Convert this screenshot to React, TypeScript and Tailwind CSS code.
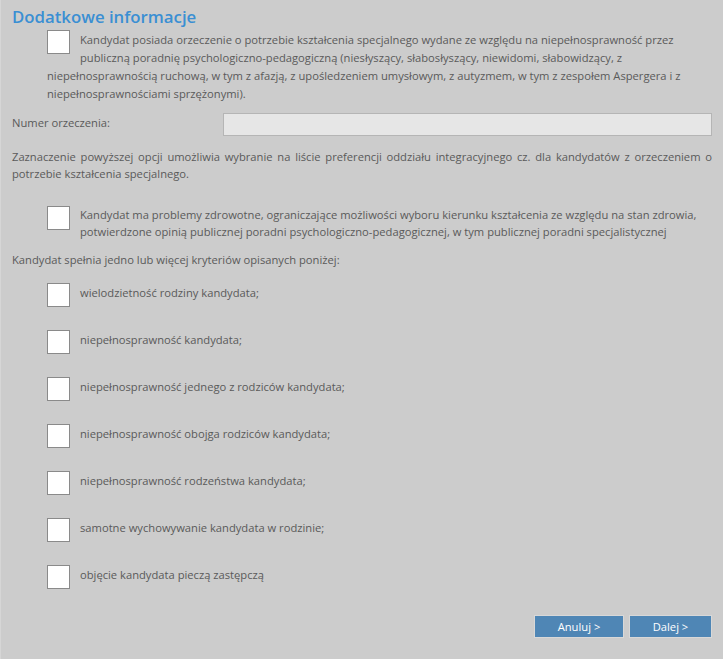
import React from "react";

const criteria = [
  "wielodzietność rodziny kandydata;",
  "niepełnosprawność kandydata;",
  "niepełnosprawność jednego z rodziców kandydata;",
  "niepełnosprawność obojga rodziców kandydata;",
  "niepełnosprawność rodzeństwa kandydata;",
  "samotne wychowywanie kandydata w rodzinie;",
  "objęcie kandydata pieczą zastępczą",
];

const Box: React.FC<{ className?: string }> = ({ className = "" }) => (
  <span
    className={`block w-[23px] h-[24px] shrink-0 bg-white border border-[#8a8a8a] ${className}`}
  />
);

export default function App() {
  return (
    <div className="w-[723px] h-[659px] bg-[#cccccc] border-l border-[#d6d6d6] font-['Open_Sans',sans-serif] text-[11.2px] leading-[18px] text-[#5a5a5a] px-[11px] flex flex-col">
      <h2 className="text-[16.8px] leading-[22px] font-semibold text-[#3a8fd3] pt-[6px]">
        Dodatkowe informacje
      </h2>

      {/* orzeczenie */}
      <div className="pl-[35px] mt-[2px]">
        <Box className="float-left mr-[10px] mb-[12px]" />
        <p className="pt-[1px]">
          Kandydat posiada orzeczenie o potrzebie kształcenia specjalnego wydane ze względu na
          niepełnosprawność przez publiczną poradnię psychologiczno-pedagogiczną (niesłyszący,
          słabosłyszący, niewidomi, słabowidzący, z niepełnosprawnością ruchową, w tym z afazją, z
          upośledzeniem umysłowym, z autyzmem, w tym z zespołem Aspergera i z
          niepełnosprawnościami sprzężonymi).
        </p>
      </div>

      <div className="flex items-center mt-[10px]">
        <span className="w-[211px] -mt-[3px]">Numer orzeczenia:</span>
        <input
          type="text"
          className="flex-1 h-[23px] bg-[#e6e6e6] border border-[#b5b5b5] focus:outline-none"
        />
      </div>

      <p className="text-justify mt-[12px] leading-[17px]">
        Zaznaczenie powyższej opcji umożliwia wybranie na liście preferencji oddziału
        integracyjnego cz. dla kandydatów z orzeczeniem o potrzebie kształcenia specjalnego.
      </p>

      {/* problemy zdrowotne */}
      <div className="flex gap-[10px] pl-[35px] mt-[24px]">
        <Box />
        <p className="leading-[17px]">
          Kandydat ma problemy zdrowotne, ograniczające możliwości wyboru kierunku kształcenia ze
          względu na stan zdrowia, potwierdzone opinią publicznej poradni
          psychologiczno-pedagogicznej, w tym publicznej poradni specjalistycznej
        </p>
      </div>

      <p className="mt-[11px]">Kandydat spełnia jedno lub więcej kryteriów opisanych poniżej:</p>

      <div className="flex flex-col gap-[23px] pl-[35px] mt-[14px]">
        {criteria.map((c) => (
          <label key={c} className="flex gap-[10px] items-start">
            <Box />
            <span className="pt-[1px]">{c}</span>
          </label>
        ))}
      </div>

      <div className="flex justify-end gap-[5px] mt-auto mb-[21px]">
        <button className="w-[90px] h-[23px] bg-[#4f86b5] border border-[#d8d8d8] text-white text-[11.2px]">
          Anuluj &gt;
        </button>
        <button className="w-[83px] h-[23px] bg-[#4f86b5] border border-[#d8d8d8] text-white text-[11.2px]">
          Dalej &gt;
        </button>
      </div>
    </div>
  );
}
